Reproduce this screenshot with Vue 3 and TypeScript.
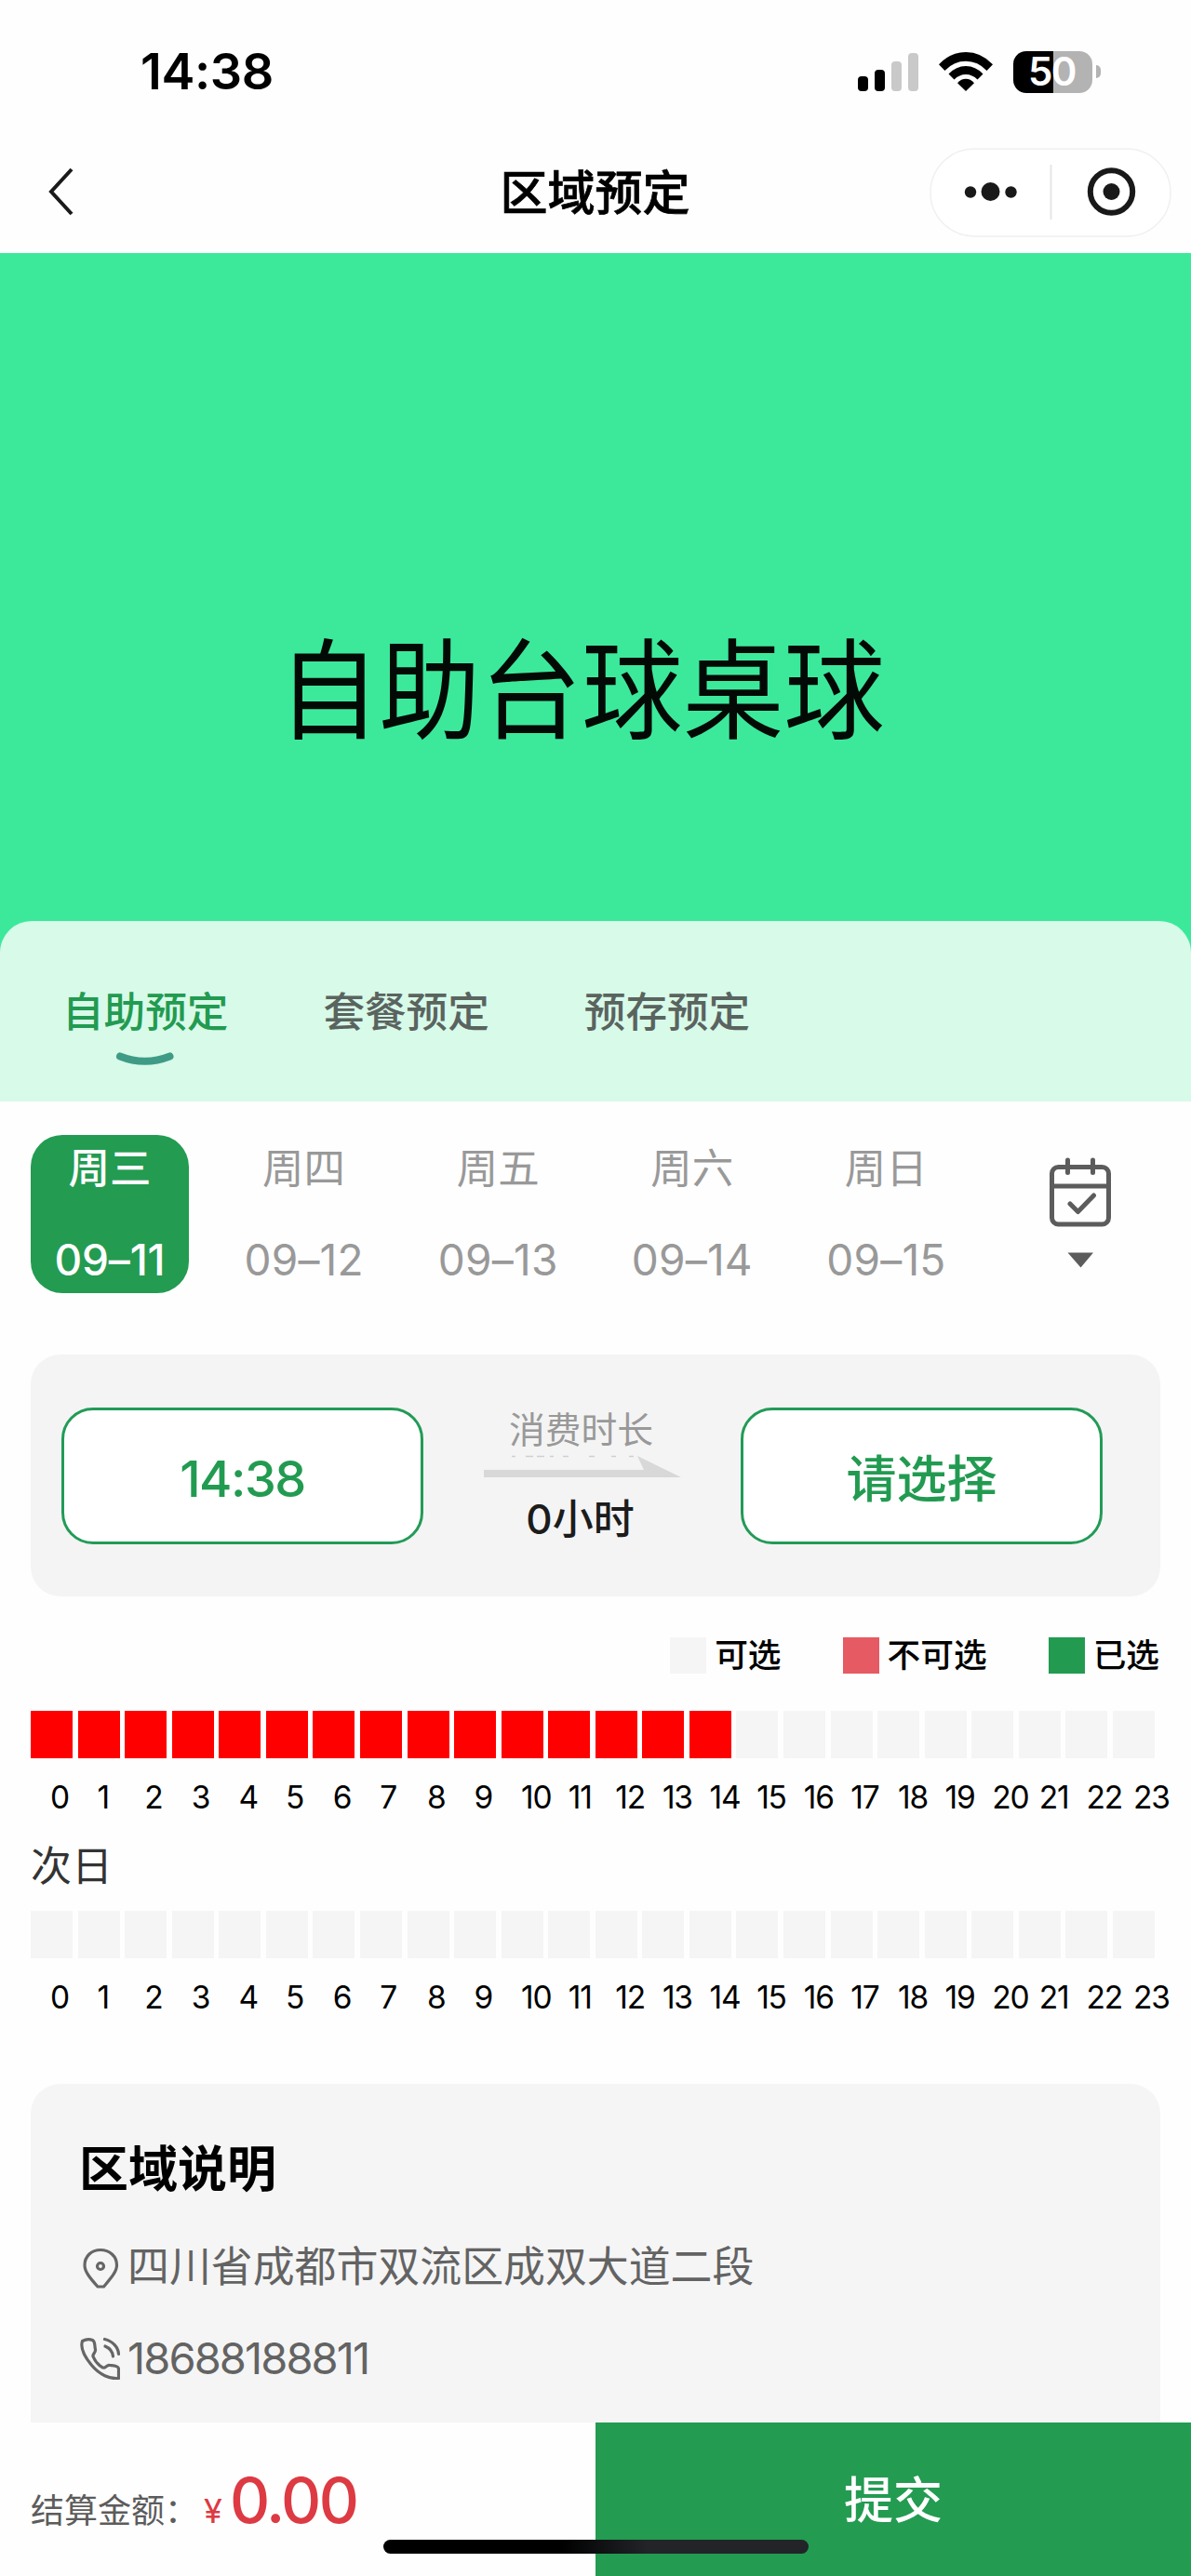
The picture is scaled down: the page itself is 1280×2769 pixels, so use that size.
<script setup lang="ts">
interface Day {
  week: string
  date: string
}

const tabs: string[] = ['自助预定', '套餐预定', '预存预定']
const activeTab = 0

const days: Day[] = [
  { week: '周三', date: '09–11' },
  { week: '周四', date: '09–12' },
  { week: '周五', date: '09–13' },
  { week: '周六', date: '09–14' },
  { week: '周日', date: '09–15' },
]
const activeDay = 0

const legend = [
  { label: '可选', kind: 'free' },
  { label: '不可选', kind: 'blocked' },
  { label: '已选', kind: 'picked' },
]

const hours: number[] = Array.from({ length: 24 }, (_, i) => i)
const pastUntil = 15
</script>

<template>
  <div class="page">
    <header class="status">
      <span class="clock">14:38</span>
      <svg class="signal" width="66" height="42" viewBox="0 0 66 42">
        <rect x="0" y="26" width="11" height="16" rx="4" fill="#000" />
        <rect x="18" y="19" width="11" height="23" rx="4" fill="#000" />
        <rect x="36" y="10" width="11" height="32" rx="4" fill="#c9c9c9" />
        <rect x="54" y="1" width="11" height="41" rx="4" fill="#c9c9c9" />
      </svg>
      <svg class="wifi" width="58" height="42" viewBox="0 0 58 42">
        <path d="M0 13.2Q12.500 0 29 0T58 13.200L51.500 20Q42 9.800 29 9.800T6.500 20Z" />
        <path d="M10.500 23.500Q18.500 15 29 15T47.500 23.500L41.500 29.500Q36 24 29 24T16.500 29.500Z" />
        <path d="M20 33.200Q24 28.800 29 28.800T38 33.200L29 42Z" />
      </svg>
      <div class="battery">
        <div class="cell"><span>50</span></div>
        <i class="nub"></i>
      </div>
    </header>

    <nav class="nav">
      <svg class="back" width="28" height="52" viewBox="0 0 28 52">
        <path d="M26 2L4 26L26 50" fill="none" stroke="#1a1a1a" stroke-width="4" />
      </svg>
      <h1>区域预定</h1>
      <div class="capsule">
        <svg width="260" height="96" viewBox="0 0 260 96">
          <rect x="1" y="1" width="258" height="94" rx="47" fill="#fff" stroke="#f0f0f0" stroke-width="1.500" />
          <g fill="#191919">
            <circle cx="44" cy="47.500" r="6.200" />
            <circle cx="65.500" cy="47" r="10" />
            <circle cx="87.500" cy="47.500" r="6.200" />
            <circle cx="195.500" cy="47" r="9" />
          </g>
          <path d="M130.500 18V77" stroke="#e4e4e4" stroke-width="1.800" />
          <circle cx="195.500" cy="47" r="22.700" fill="none" stroke="#191919" stroke-width="6" />
        </svg>
      </div>
    </nav>

    <section class="hero"><span>自助台球桌球</span></section>

    <div class="tab-wrap">
      <div class="tabs">
        <div v-for="(t, i) in tabs" :key="t" class="tab" :class="{ on: i === activeTab }">
          <span>{{ t }}</span>
          <svg v-if="i === activeTab" width="64" height="18" viewBox="0 0 64 18">
            <path d="M5 5.500Q31.500 16 58.500 5.500" fill="none" stroke="#3f9b86" stroke-width="8" stroke-linecap="round" />
          </svg>
        </div>
      </div>
    </div>

    <section class="days">
      <div v-for="(d, i) in days" :key="d.date" class="day" :class="{ on: i === activeDay }">
        <span class="week">{{ d.week }}</span>
        <span class="date">{{ d.date }}</span>
      </div>
      <svg class="cal" width="70" height="122" viewBox="0 0 70 122">
        <g fill="none" stroke="#5c5c5c" stroke-width="5" stroke-linecap="round" stroke-linejoin="round">
          <rect x="4.500" y="12.500" width="61" height="61.500" rx="7" />
          <path d="M4.500 33H65.500M21.500 5V18.500M48.500 5V18.500M24 52L32.500 60.500L49.500 43" />
        </g>
        <path d="M21.500 104.500H49L35.500 120.500Z" fill="#5c5c5c" />
      </svg>
    </section>

    <section class="times">
      <div class="time start">14:38</div>
      <div class="span">
        <span class="cap">消费时长</span>
        <svg width="212" height="26" viewBox="0 0 212 26">
          <path d="M30 2.500H34M45 2.500H53M57 2.500H65M71 2.500H75M85 2.500H91M113 2.500H119M137 2.500H142M156 2.500H161" stroke="#cfcfcf" stroke-width="1.500" />
          <path d="M0 17H172L165 2L212 25H0Z" fill="#d8d8d8" />
        </svg>
        <span class="hours">0小时</span>
      </div>
      <div class="time end">请选择</div>
    </section>

    <div class="legend">
      <div v-for="l in legend" :key="l.kind" class="key">
        <i :class="l.kind"></i><span>{{ l.label }}</span>
      </div>
    </div>

    <div class="slots">
      <i v-for="h in hours" :key="h" :class="{ past: h < pastUntil }"></i>
    </div>
    <div class="ticks"><span v-for="h in hours" :key="h">{{ h }}</span></div>
    <div class="next">次日</div>
    <div class="slots">
      <i v-for="h in hours" :key="h"></i>
    </div>
    <div class="ticks"><span v-for="h in hours" :key="h">{{ h }}</span></div>

    <section class="info">
      <h2>区域说明</h2>
      <div class="line">
        <svg width="44" height="46" viewBox="0 0 44 46">
          <g fill="none" stroke="#666" stroke-width="3.200">
            <path d="M20 44C12 35 6 28 6 21C6 11 13.500 4.500 23 4.500S40.500 11 40.500 21C40.500 28 34 35 26.500 44Z" stroke-linejoin="round" />
            <circle cx="23" cy="22" r="3.500" />
          </g>
        </svg>
        <span>四川省成都市双流区成双大道二段</span>
      </div>
      <div class="line phone">
        <svg width="44" height="46" viewBox="0 0 44 46">
          <g fill="none" stroke="#666" stroke-width="3.200" stroke-linecap="round" stroke-linejoin="round">
            <path d="M3.500 4.500C7 2.500 11 2 14.500 3.500C17.500 5 16.500 10 17.500 13.500C18 17 14.500 18 15 21C17 26 21 30.500 25.500 33C28 34.500 29.500 30 33 30.500C37 31 42 31 42.500 34V44.500C33 45.500 22 40.500 14 31C6 21.500 1 12 3.500 4.500Z" />
            <path d="M28 10C33 12 36 16 36.500 21M27.500 2.500C36 4.500 42 11 42.500 18.500" />
          </g>
        </svg>
        <span>18688188811</span>
      </div>
    </section>

    <footer class="bar">
      <div class="sum">
        <span class="label">结算金额：</span>
        <span class="yen">¥</span>
        <span class="amount">0.00</span>
      </div>
      <div class="submit">提交</div>
      <i class="home"></i>
    </footer>
  </div>
</template>

<style>
body {
  background: #fff;
}
</style>

<style scoped>
.page {
  width: 1280px;
  height: 2769px;
  overflow: hidden;
  box-sizing: border-box;
  background: #fefefe;
  color: #000;
  font-family: Inter, 'Noto Sans CJK SC', sans-serif;
  display: flex;
  flex-direction: column;
}
.page * {
  box-sizing: border-box;
}
.page > * {
  flex: none;
}
svg {
  display: block;
  flex: none;
}
i {
  display: block;
}
.status {
  height: 154px;
  display: flex;
  align-items: center;
  padding-left: 151px;
}
.clock {
  width: 771px;
  font-size: 54px;
  font-weight: 600;
  letter-spacing: -0.400px;
  line-height: 60px;
}
.signal {
  margin-right: 21px;
}
.wifi {
  margin-right: 22px;
}
.battery {
  display: flex;
  align-items: center;
  gap: 4px;
}
.cell {
  width: 85px;
  height: 45px;
  border-radius: 14px;
  background: linear-gradient(90deg, #000 51%, #b3b3b3 51%);
  color: #fff;
  font-size: 42px;
  font-weight: 600;
  line-height: 44px;
  letter-spacing: -1.500px;
  text-align: center;
  padding-right: 2px;
}
.nub {
  width: 5px;
  height: 14px;
  border-radius: 0 5px 5px 0;
  background: #b3b3b3;
}
.nav {
  height: 118px;
  padding: 0 21px 14px 51px;
  display: grid;
  grid-template-columns: 1fr 200px 1fr;
  align-items: center;
}
.nav h1 {
  margin: 4px 0 0 -31px;
  font-size: 51px;
  font-weight: 500;
  -webkit-text-stroke: 0.700px #000;
  line-height: 60px;
  white-space: nowrap;
  display: flex;
  justify-content: center;
}
.capsule {
  justify-self: end;
  padding-top: 1px;
}
.hero {
  height: 718px;
  background: #3ce99b;
  padding: 401px 30px 0 0;
  text-align: center;
}
.hero span {
  display: inline-block;
  font-size: 108.700px;
  line-height: 140px;
  color: #030a06;
  transform: scaleY(1.08);
}
.tab-wrap {
  background: #3ce99b;
}
.tabs {
  height: 194px;
  border-radius: 34px 34px 0 0;
  background: #d8fae9;
  display: flex;
  gap: 102px;
  padding: 68px 0 0 67px;
}
.tab {
  display: flex;
  flex-direction: column;
  align-items: center;
  font-size: 44.600px;
  font-weight: 500;
  line-height: 60px;
  color: #5a645f;
}
.tab.on {
  color: #229b51;
}
.tab svg {
  margin-top: 12px;
}
.days {
  height: 272px;
  padding: 36px 0 0 33px;
  display: flex;
  gap: 38.600px;
  color: #999;
}
.day {
  width: 170px;
  height: 170px;
  border-radius: 34px;
  padding-top: 6px;
  display: flex;
  flex-direction: column;
  align-items: center;
  font-size: 44.500px;
  line-height: 60px;
}
.day.on {
  background: #239b51;
  color: #fff;
}
.day.on .week,
.day.on .date {
  font-weight: 500;
}
.date {
  margin-top: 38px;
  font-size: 46px;
  letter-spacing: 0.200px;
}
.day.on .date {
  letter-spacing: -0.200px;
}
.cal {
  margin: 22px 0 0 50px;
}
.times {
  height: 260px;
  margin: 0 33px;
  border-radius: 32px;
  background: #f4f4f4;
  padding: 57px 62px 0 33px;
  display: flex;
  justify-content: space-between;
}
.time {
  width: 389px;
  height: 147px;
  border: 3px solid #229b57;
  border-radius: 34px;
  background: #fff;
  color: #229b51;
  font-weight: 500;
  text-align: center;
  line-height: 148px;
  font-size: 54px;
}
.start {
  letter-spacing: -1.500px;
}
.end {
  line-height: 149px;
}
.span {
  width: 212px;
  display: flex;
  flex-direction: column;
  align-items: center;
}
.cap {
  font-size: 38.800px;
  line-height: 48px;
  height: 50px;
  margin-left: -2px;
  color: #999;
}
.hours {
  margin-top: 19px;
  font-size: 44px;
  font-weight: 500;
  line-height: 50px;
  color: #1c1c1c;
  margin-left: -4px;
}
.legend {
  height: 39px;
  margin: 44px 33px 40px 0;
  display: flex;
  justify-content: flex-end;
  gap: 66px;
}
.key {
  display: flex;
  gap: 9px;
  font-size: 35.700px;
  font-weight: 500;
  line-height: 39px;
}
.key i {
  width: 39px;
  height: 39px;
}
.key:last-child {
  margin-right: 1px;
}
.free {
  background: #f5f5f5;
}
.blocked {
  background: #e65a63;
}
.picked {
  background: #229b51;
}
.slots {
  height: 51px;
  padding-left: 33px;
  display: grid;
  grid-template-columns: repeat(24, 50.570px);
}
.slots i {
  width: 45px;
  background: #f5f5f5;
}
.slots .past {
  background: #fe0000;
}
.ticks {
  margin-top: 22px;
  padding-left: 54px;
  display: grid;
  grid-template-columns: repeat(24, 50.620px);
  font-size: 33.500px;
  line-height: 41px;
  height: 40px;
  letter-spacing: -1.200px;
  white-space: nowrap;
}
.next {
  height: 102px;
  padding: 24px 0 0 33px;
  font-size: 44px;
  line-height: 60px;
  color: #333;
}
.info {
  height: 364px;
  margin: 73px 33px 0;
  border-radius: 32px 32px 0 0;
  background: #f5f5f5;
  padding: 62px 0 0 52px;
}
.info h2 {
  margin: 0;
  font-size: 53px;
  font-weight: 700;
  line-height: 60px;
}
.line {
  display: flex;
  align-items: center;
  gap: 8px;
  height: 60px;
  margin-top: 45px;
  font-size: 44.900px;
  line-height: 60px;
  color: #636363;
}
.phone {
  margin-top: 38px;
  font-size: 47px;
  letter-spacing: -1.900px;
}
.bar {
  height: 165px;
  display: flex;
  position: relative;
}
.sum {
  width: 640px;
  padding-left: 33px;
  display: flex;
  align-items: baseline;
  line-height: 80px;
  padding-top: 44px;
  color: #5c5c5c;
}
.label {
  width: 186px;
  font-size: 36px;
  white-space: nowrap;
}
.yen {
  width: 28px;
  font-size: 36px;
  color: #dd3a43;
}
.amount {
  font-size: 67px;
  font-weight: 500;
  letter-spacing: -2.500px;
  color: #dd3a43;
}
.submit {
  width: 640px;
  background: #239b51;
  color: #fff;
  text-align: center;
  font-size: 53px;
  font-weight: 500;
  line-height: 168px;
}
.home {
  position: absolute;
  left: 412px;
  top: 126px;
  width: 457px;
  height: 15px;
  border-radius: 8px;
  background: linear-gradient(90deg, #000 42%, #222428 62%);
}
</style>
